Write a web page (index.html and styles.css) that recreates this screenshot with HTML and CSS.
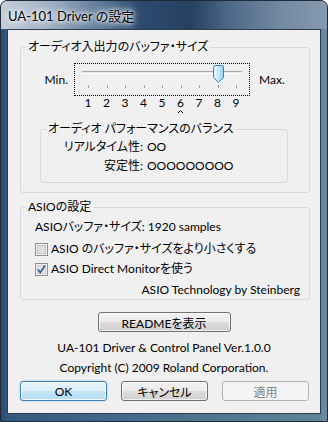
FILE: index.html
```html
<!DOCTYPE html>
<html lang="ja">
<head>
    <meta charset="UTF-8">
    <meta name="viewport" content="width=device-width, initial-scale=1.0">
    <title>UA-101 Driver の設定</title>
    <link rel="stylesheet" href="styles.css">
</head>
<body>
    <div class="window">
        <div class="titlebar"><span class="title">UA-101 Driver の設定</span></div>

        <div class="client">
            <!-- バッファ・サイズ -->
            <fieldset class="group buffer">
                <legend>オーディオ入出力のバッファ・サイズ</legend>
                <div class="slider-row">
                    <span class="end min">Min.</span>
                    <div class="slider">
                        <div class="track"></div>
                        <div class="ticks"><i></i><i></i><i></i><i></i><i></i><i></i><i></i><i></i><i></i></div>
                        <svg class="thumb" width="11" height="18" viewBox="0 0 11 18">
                            <defs>
                                <linearGradient id="tg" x1="0" y1="0" x2="1" y2="0">
                                    <stop offset="0" stop-color="#e9f7fd"/>
                                    <stop offset="0.5" stop-color="#c4e9fa"/>
                                    <stop offset="1" stop-color="#8fd0ef"/>
                                </linearGradient>
                            </defs>
                            <path d="M0.5 2.5 Q0.5 0.5 2.5 0.5 H8.5 Q10.5 0.5 10.5 2.5 V12.5 L5.5 17.3 L0.5 12.5 Z" fill="url(#tg)" stroke="#3c7fb1"/>
                        </svg>
                    </div>
                    <span class="end">Max.</span>
                </div>
                <div class="scale">
                    <span>1</span><span>2</span><span>3</span><span>4</span><span>5</span><span>6</span><span>7</span><span>8</span><span>9</span>
                </div>
                <svg class="caret" width="5" height="3" viewBox="0 0 5 3">
                    <path d="M0 3 L2.5 0.5 L5 3" fill="none" stroke="#000"/>
                </svg>

                <fieldset class="group balance">
                    <legend>オーディオ パフォーマンスのバランス</legend>
                    <div class="meter"><span class="label">リアルタイム性:</span><span>OO</span></div>
                    <div class="meter"><span class="label">安定性:</span><span>OOOOOOOOO</span></div>
                </fieldset>
            </fieldset>

            <!-- ASIOの設定 -->
            <fieldset class="group asio">
                <legend>ASIOの設定</legend>
                <div class="asio-size">ASIOバッファ・サイズ: 1920 samples</div>
                <label class="check first">
                    <svg class="box" width="13" height="13" viewBox="0 0 13 13">
                        <rect x="0.5" y="0.5" width="12" height="12" fill="#f4f4f4" stroke="#8f8f8f"/>
                        <rect x="2.5" y="2.5" width="8" height="8" fill="#dcdee2" stroke="#c2c5ca"/>
                    </svg>
                    ASIO のバッファ・サイズをより小さくする
                </label>
                <label class="check">
                    <svg class="box" width="13" height="13" viewBox="0 0 13 13">
                        <rect x="0.5" y="0.5" width="12" height="12" fill="#f4f4f4" stroke="#8f8f8f"/>
                        <rect x="2.5" y="2.5" width="8" height="8" fill="#e4e6ea" stroke="#c8cbd0"/>
                        <path d="M3 6.5 L5.3 9.5 L10 2.5" fill="none" stroke="#3d5a9e" stroke-width="1.8"/>
                    </svg>
                    ASIO Direct Monitorを使う
                </label>
                <div class="credit">ASIO Technology by Steinberg</div>
            </fieldset>

            <button class="readme">READMEを表示</button>
            <p class="info">UA-101 Driver &amp; Control Panel Ver.1.0.0</p>
            <p class="info">Copyright (C) 2009 Roland Corporation.</p>

            <div class="actions">
                <button class="default">OK</button>
                <button>キャンセル</button>
                <button disabled>適用</button>
            </div>
        </div>
    </div>
</body>
</html>
```

FILE: styles.css
```css
* {
    box-sizing: border-box;
}
html, body {
    margin: 0;
}
body {
    background-color: #fff;
    font-family: Lato, "Noto Sans CJK JP", sans-serif;
    font-size: 12px;
    font-feature-settings: "palt";
    color: #000;
}
.window {
    width: 328px;
    height: 422px;
    display: flex;
    flex-direction: column;
    border: 1px solid #1d2b3b;
    border-radius: 7px 7px 0 0;
    overflow: hidden;
    background: linear-gradient(90deg, #2b4a70 0, #35597f 2%, #4a6f8c 50%, #5e8396 97%, #6b8c9e 100%);
}
.titlebar {
    height: 28px;
    padding-left: 7px;
    display: flex;
    align-items: center;
    background: linear-gradient(90deg, #c4ced8 0, #a3b3c4 14%, #607c9b 30%, #2d4b70 42%, #26415f 58%, #4d6888 70%, #7188a1 85%, #8699ae 100%);
}
.title {
    font-size: 13px;
    text-shadow: 0 0 6px #fff, 0 0 10px #fff, 0 0 3px #fff;
}
.client {
    height: 385px;
    margin: 0 6px;
    background-color: #f0f0f0;
    border: 1px solid #2c3d50;
    display: flex;
    flex-direction: column;
}
.group {
    margin: 0;
    padding: 0 5px;
    border: 1px solid #d3dbe0;
    border-radius: 3px;
    min-width: 0;
}
.group legend {
    padding: 0 2px;
    line-height: 16px;
}
.buffer {
    margin: 9px 10px 0 12px;
    padding-bottom: 9px;
}
.slider-row {
    display: flex;
    align-items: center;
    margin-top: 8px;
}
.end {
    line-height: 16px;
}
.min {
    width: 42px;
    text-align: right;
    margin-right: 6px;
}
.slider {
    position: relative;
    width: 176px;
    height: 33px;
    border: 1px dotted #000;
    margin-right: 9px;
    padding-top: 7px;
}
.track {
    margin-left: 7px;
    width: 160px;
    height: 3px;
    border-top: 1px solid #a8a8a8;
    border-bottom: 1px solid #fff;
    background-color: #e4e6e8;
}
.ticks {
    display: flex;
    justify-content: space-between;
    margin: 11px 12px 0 13px;
}
.ticks i {
    width: 1px;
    height: 3px;
    background-color: #a0a0a0;
}
.thumb {
    position: absolute;
    left: 138px;
    top: 1px;
}
.scale {
    display: flex;
    justify-content: space-between;
    width: 158px;
    margin-left: 57px;
    line-height: 14px;
}
.scale span {
    width: 10px;
    text-align: center;
}
.caret {
    display: block;
    margin-left: 152px;
}
.balance {
    margin: 8px 0 0 14px;
    width: 248px;
    padding-bottom: 7px;
}
.meter {
    display: flex;
    line-height: 19px;
}
.meter .label {
    width: 97px;
    text-align: right;
    margin-right: 4px;
}
.asio {
    margin: 6px 10px 0 12px;
    padding: 0 9px 0 14px;
}
.asio legend {
    margin-left: -9px;
}
.asio-size {
    margin-top: 3px;
    line-height: 18px;
}
.check {
    display: flex;
    align-items: center;
    line-height: 20px;
}
.check.first {
    margin-top: 3px;
}
.check .box {
    margin-right: 3px;
}
.credit {
    margin-top: 2px;
    line-height: 18px;
    text-align: right;
}
button {
    font: inherit;
    font-feature-settings: "palt";
    height: 20px;
    padding: 0;
    color: #000;
    border: 1px solid #707070;
    border-radius: 3px;
    background: linear-gradient(#f2f2f2 0, #ebebeb 50%, #dddddd 50%, #cfcfcf 100%);
    box-shadow: inset 0 0 0 1px rgba(255, 255, 255, 0.7);
}
.readme {
    align-self: center;
    width: 133px;
    margin-top: 12px;
}
.info {
    margin: 0;
    line-height: 20px;
    text-align: center;
}
.readme + .info {
    margin-top: 6px;
}
.actions {
    display: flex;
    gap: 14px;
    margin: 3px 0 0 12px;
}
.actions button {
    width: 87px;
}
.actions .default {
    border-color: #3c7fb1;
    background: linear-gradient(#e9f5fc 0, #dbeff9 50%, #c6e5f6 50%, #b3dcf2 100%);
    box-shadow: inset 0 0 0 1px rgba(255, 255, 255, 0.8), 0 0 2px #8fcbef;
}
.actions button:disabled {
    border-color: #adb2b5;
    background: #f4f4f4;
    color: #838383;
    box-shadow: none;
}
```
